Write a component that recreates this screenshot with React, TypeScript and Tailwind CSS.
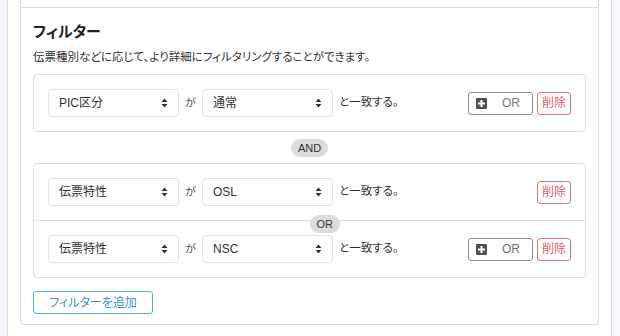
import React from 'react';

const font = { fontFamily: '"Liberation Sans", "Noto Sans CJK JP", sans-serif' };

function Chevron() {
    return (
        <svg width="7" height="10" viewBox="0 0 7 10" className="shrink-0">
            <path d="M3.5 0.5 L6.5 4 L0.5 4 Z" fill="#333" />
            <path d="M3.5 9.5 L6.5 6 L0.5 6 Z" fill="#333" />
        </svg>
    );
}

function Select({ value }: { value: string }) {
    return (
        <div className="w-[131px] h-[28px] shrink-0 flex items-center justify-between pl-[10px] pr-[10px] bg-white border border-[#e3e3e3] rounded-[4px] text-[12px] text-[#333]">
            <span>{value}</span>
            <Chevron />
        </div>
    );
}

function OrButton() {
    return (
        <div className="w-[65px] h-[23px] flex items-center pl-[7px] border border-[#8a9097] rounded-[3px] text-[12px] text-[#777]">
            <svg width="11" height="11" viewBox="0 0 11 11" className="shrink-0">
                <rect x="0" y="0" width="11" height="11" rx="1" fill="#4a5158" />
                <rect x="4.5" y="2" width="2" height="7" fill="#fff" />
                <rect x="2" y="4.5" width="7" height="2" fill="#fff" />
            </svg>
            <span className="ml-[15px]">OR</span>
        </div>
    );
}

function DeleteButton() {
    return (
        <div className="w-[34px] h-[23px] flex items-center justify-center border border-[#e8727c] rounded-[3px] text-[12px] text-[#e05f6b]">
            削除
        </div>
    );
}

function Row({ field, value, showOr }: { field: string; value: string; showOr: boolean }) {
    return (
        <div className="flex items-center px-[14px] py-[14px]">
            <Select value={field} />
            <span className="w-[23px] text-center text-[11px] text-[#555]">が</span>
            <Select value={value} />
            <span className="ml-[6px] text-[11.5px] text-[#333]">と一致する。</span>
            <div className="ml-auto flex items-center gap-[4px]">
                {showOr && <OrButton />}
                <DeleteButton />
            </div>
        </div>
    );
}

function Pill({ label }: { label: string }) {
    return (
        <span className="inline-flex items-center justify-center h-[18px] px-[7px] rounded-full bg-[#dcdcdc] text-[11px] text-[#333]">
            {label}
        </span>
    );
}

export default function App() {
    return (
        <div className="w-[620px] h-[336px] overflow-hidden bg-[#f5f9fe] [font-feature-settings:'palt']" style={font}>
            <div className="ml-[7px] w-[605px] h-[336px] bg-white border-x border-[#dcdcdc] px-[12px]">
                <div className="border-x border-b border-[#dedede] rounded-b-[4px]">
                    <div className="h-[8px] border-b border-[#dedede]" />
                    <div className="px-[12px] pt-[12px] pb-[10px]">
                        <h2 className="text-[15px] font-bold text-[#222] leading-[24px]">フィルター</h2>
                        <p className="mt-[5px] text-[11.5px] text-[#333] leading-[16px]">
                            伝票種別などに応じて、より詳細にフィルタリングすることができます。
                        </p>

                        <div className="mt-[9px] border border-[#dedede] rounded-[4px]">
                            <Row field="PIC区分" value="通常" showOr={true} />
                        </div>

                        <div className="flex justify-center pt-[7px] pb-[6px]">
                            <Pill label="AND" />
                        </div>

                        <div className="relative border border-[#dedede] rounded-[4px]">
                            <Row field="伝票特性" value="OSL" showOr={false} />
                            <div className="relative border-t border-[#dedede]">
                                <div className="absolute left-1/2 -top-[10px]">
                                    <Pill label="OR" />
                                </div>
                                <Row field="伝票特性" value="NSC" showOr={true} />
                            </div>
                        </div>

                        <button className="mt-[13px] w-[120px] h-[23px] flex items-center justify-center border border-[#5ea8f2] rounded-[3px] text-[12px] text-[#3d8fe0]">
                            フィルターを追加
                        </button>
                    </div>
                </div>
            </div>
        </div>
    );
}
